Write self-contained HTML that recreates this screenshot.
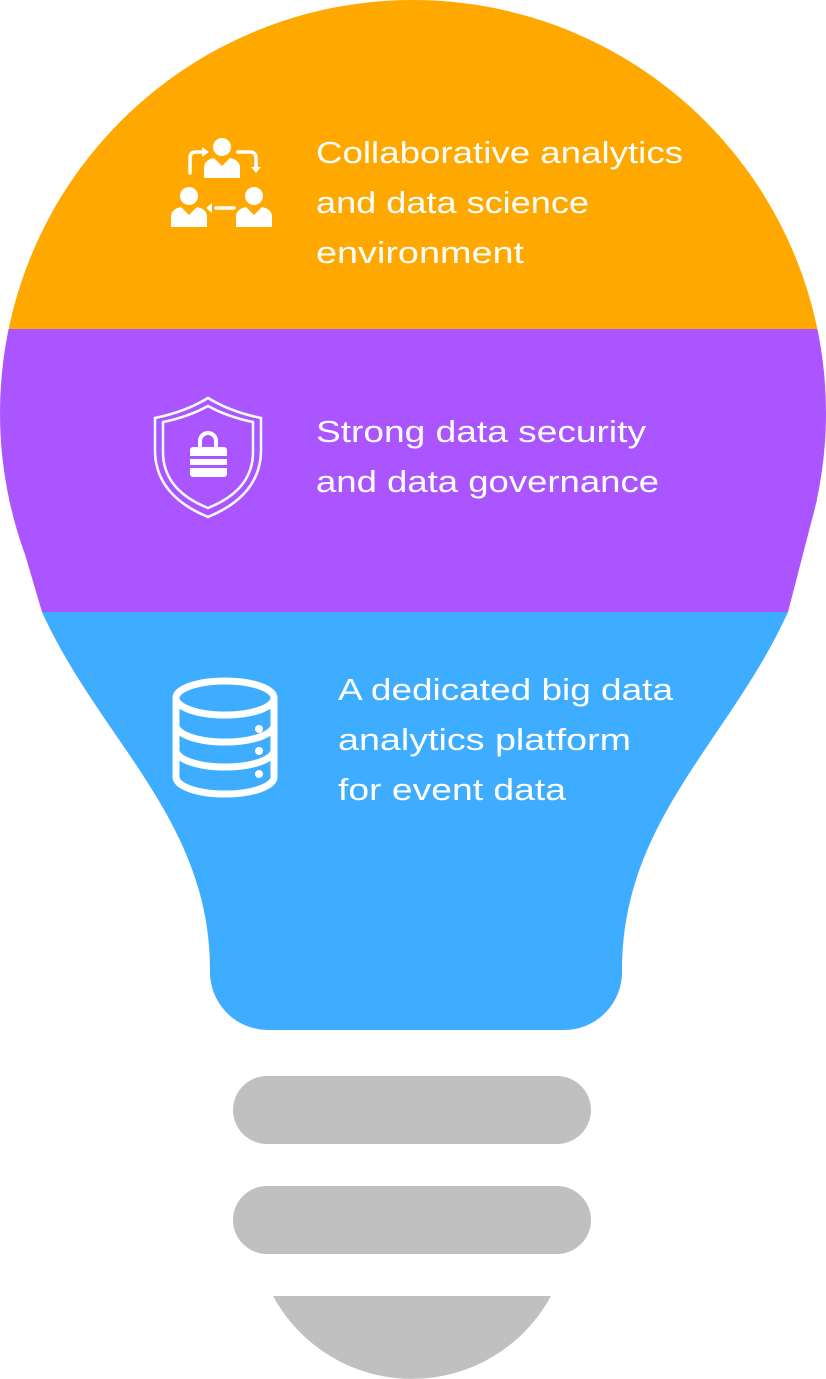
<!DOCTYPE html>
<html><head><style>
html,body{margin:0;padding:0;background:#fff;}
svg{display:block}
text{font-family:"Liberation Sans",sans-serif;font-size:31px;fill:#fff;}
</style></head><body>
<svg width="826" height="1379" viewBox="0 0 826 1379">
<defs><clipPath id="b">
<circle cx="413" cy="413" r="413"/>
<path d="M9,500 L42,612 C100,740 210,820 210,970 A58,58 0 0 0 268,1030 L562,1030 A58,58 0 0 0 622,970 C622,820 730,740 788,612 L817,500 Z"/>
</clipPath></defs>
<g clip-path="url(#b)">
<rect x="0" y="0" width="826" height="329" fill="#FFA800"/>
<rect x="0" y="329" width="826" height="283" fill="#AA55FF"/>
<rect x="0" y="612" width="826" height="430" fill="#3FADFF"/>
</g>
<rect x="233" y="1076" width="358" height="68" rx="34" fill="#C0C0C0"/>
<rect x="233" y="1186" width="358" height="68" rx="34" fill="#C0C0C0"/>
<path d="M273,1296 A158,158 0 0 0 551,1296 Z" fill="#C0C0C0"/>

<g fill="#fff">
<circle cx="222" cy="147" r="9"/>
<path d="M204,178 v-10 q0,-8 10,-10 l8,8 l8,-8 q10,2 10,10 v10 z"/>
<circle cx="189" cy="196" r="9"/>
<path d="M171,227 v-10 q0,-8 10,-10 l8,8 l8,-8 q10,2 10,10 v10 z"/>
<circle cx="254" cy="196" r="9"/>
<path d="M236,227 v-10 q0,-8 10,-10 l8,8 l8,-8 q10,2 10,10 v10 z"/>
</g>
<g stroke="#fff" stroke-width="3.5" fill="none" stroke-linecap="round">
<path d="M190,173 v-15 q0,-6 6,-6 h6"/>
<path d="M238,152 h12 q6,0 6,6 v10"/>
<path d="M234,208 h-18"/>
</g>
<g fill="#fff">
<path d="M202,147 l7,5 l-7,5 z"/>
<path d="M251,167 h10 l-5,6 z"/>
<path d="M212,203 v10 l-6,-5 z"/>
</g>

<g stroke="#fff" stroke-width="2.5" fill="none">
<path d="M208,398 Q185,412 155,418 V450 Q155,495 208,517 Q261,495 261,450 V418 Q231,412 208,398 Z"/>
<path d="M208,406 Q188,417 163,422 V452 Q163,490 208,508 Q253,490 253,452 V422 Q228,417 208,406 Z"/>
<path d="M200,447 v-6 a8,8 0 0 1 16,0 v6" stroke-width="4"/>
</g>
<rect x="190" y="447" width="37" height="30" rx="3" fill="#fff"/>
<rect x="190" y="456" width="37" height="3" fill="#AA55FF"/>
<rect x="190" y="465" width="37" height="3" fill="#AA55FF"/>

<g stroke="#fff" stroke-width="7" fill="none">
<ellipse cx="225" cy="698" rx="49" ry="17"/>
<path d="M176,698 V777 A49,17 0 0 0 274,777 V698"/>
<path d="M176,725 A49,17 0 0 0 274,725"/>
<path d="M176,750 A49,17 0 0 0 274,750"/>
</g>
<g fill="#fff">
<circle cx="259" cy="729" r="4"/><circle cx="259" cy="751" r="4"/><circle cx="259" cy="774" r="4"/>
</g>

<text x="316" y="163" textLength="367" lengthAdjust="spacingAndGlyphs">Collaborative analytics</text>
<text x="316" y="213" textLength="273" lengthAdjust="spacingAndGlyphs">and data science</text>
<text x="316" y="263" textLength="208" lengthAdjust="spacingAndGlyphs">environment</text>
<text x="316" y="442" textLength="330" lengthAdjust="spacingAndGlyphs">Strong data security</text>
<text x="316" y="492" textLength="343" lengthAdjust="spacingAndGlyphs">and data governance</text>
<text x="338" y="700" textLength="335" lengthAdjust="spacingAndGlyphs">A dedicated big data</text>
<text x="338" y="750" textLength="293" lengthAdjust="spacingAndGlyphs">analytics platform</text>
<text x="338" y="800" textLength="228" lengthAdjust="spacingAndGlyphs">for event data</text>
</svg>
</body></html>
